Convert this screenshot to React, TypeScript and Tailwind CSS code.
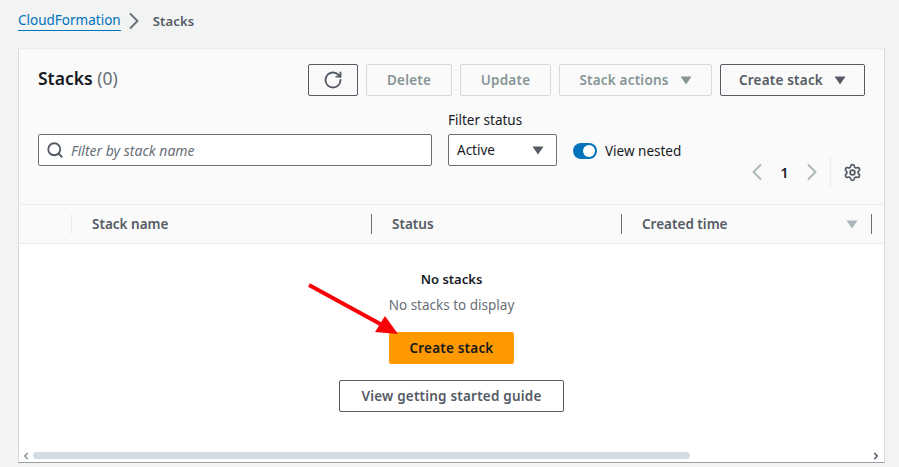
import React from 'react';
import { RotateCw, Search, ChevronLeft, ChevronRight, Settings } from 'lucide-react';

const font = "font-['Noto_Sans','Open_Sans',sans-serif]";

function Caret({ className }: { className: string }) {
  return (
    <svg width="12" height="9" viewBox="0 0 12 9" className={className}>
      <path d="M0.5 0.5H11.5L6 8.5Z" fill="currentColor" />
    </svg>
  );
}

function Btn({ children, off, className }: { children: React.ReactNode; off?: boolean; className: string }) {
  return (
    <div
      className={`h-8 flex items-center justify-center rounded-[2px] border text-[13.5px] font-semibold tracking-[0.2px] ${
        off ? 'border-[#d5dbdb] text-[#879596]' : 'border-[#545b64] text-[#545b64]'
      } ${className}`}
    >
      {children}
    </div>
  );
}

function Th({ label, className, children }: { label: string; className: string; children?: React.ReactNode }) {
  return (
    <div className={`h-5 flex items-center justify-between border-r border-[#687078] text-[13.5px] font-semibold text-[#545b64] pl-5 ${className}`}>
      {label}
      {children}
    </div>
  );
}

export default function App() {
  return (
    <div className={`relative w-[899px] h-[467px] overflow-hidden bg-[#f2f3f3] ${font}`}>
      <div className="h-[48px] pl-[18px] pt-[11px] flex items-start text-[13.5px] leading-5">
        <span className="text-[#0073bb] border-b border-[#0073bb] leading-[19px]">CloudFormation</span>
        <ChevronRight className="w-[28px] h-[28px] -mt-[4px] -mx-[1px] text-[#687078]" strokeWidth={1.6} />
        <span className="ml-[6px] font-semibold text-[#545b64] text-[13px] tracking-[0.2px]">Stacks</span>
      </div>

      <div className="ml-[18px] w-[867px] h-[415px] bg-white border-l border-r border-b border-t border-t-[#eaeded] border-l-[#d5dbdb] border-r-[#d5dbdb] border-b-[#9aa0a6] flex flex-col">
        <div className="h-[156px] bg-[#fafafa] border-b border-[#eaeded] px-[19px] pt-[15px] flex flex-col">
          <div className="flex items-start justify-between">
            <div className="text-[17.5px] leading-[28px] font-semibold text-[#16191f]">
              Stacks <span className="font-normal text-[#687078]">(0)</span>
            </div>
            <div className="flex gap-2">
              <Btn className="w-[50px]">
                <RotateCw className="w-[20px] h-[20px]" strokeWidth={2.2} />
              </Btn>
              <Btn off className="w-[86px]">Delete</Btn>
              <Btn off className="w-[91px]">Update</Btn>
              <Btn off className="w-[153px] gap-[11px]">
                Stack actions <Caret className="text-[#879596]" />
              </Btn>
              <Btn className="w-[145px] gap-[11px]">
                Create stack <Caret className="text-[#545b64]" />
              </Btn>
            </div>
          </div>

          <div className="flex items-start mt-[23px]">
            <div className="w-[394px] h-8 mt-[15px] bg-white border border-[#687078] rounded-[2px] flex items-center pl-[7px] text-[14px] italic text-[#687078]">
              <Search className="w-[18px] h-[18px] mr-[7px] text-[#545b64]" strokeWidth={2.4} />
              Filter by stack name
            </div>
            <div className="ml-4 w-[109px]">
              <div className="text-[13.5px] leading-[19px] text-[#16191f] -mt-[8px] mb-[4px]">Filter status</div>
              <div className="h-8 bg-white border border-[#687078] rounded-[2px] flex items-center justify-between pl-2 pr-[12px] text-[13.5px] text-[#16191f]">
                Active <Caret className="text-[#545b64]" />
              </div>
            </div>
            <div className="ml-4 mt-[22px] flex items-center gap-2 text-[13.5px] text-[#16191f]">
              <div className="w-6 h-4 rounded-full bg-[#0073bb] flex items-center justify-end pr-[2px]">
                <div className="w-3 h-3 rounded-full bg-white" />
              </div>
              View nested
            </div>
          </div>

          <div className="flex justify-end items-center -mt-[10px] h-[32px] pr-[3px]">
            <ChevronLeft className="w-[28px] h-[28px] text-[#aab7b8]" strokeWidth={1.7} />
            <span className="w-[27px] text-[14px] font-semibold text-[#16191f] text-center">1</span>
            <ChevronRight className="w-[28px] h-[28px] text-[#aab7b8]" strokeWidth={1.7} />
            <div className="h-8 border-l border-[#eaeded] ml-[4px] mr-[12px]" />
            <Settings className="w-[19px] h-[19px] text-[#545b64]" strokeWidth={2.2} />
          </div>
        </div>

        <div className="h-[39px] bg-[#fafafa] border-b border-[#eaeded] flex items-center shrink-0">
          <div className="w-[53px] h-5 border-r border-[#eaeded]" />
          <Th label="Stack name" className="w-[300px]" />
          <Th label="Status" className="w-[250px]" />
          <Th label="Created time" className="w-[250px] pr-[13px]">
            <Caret className="text-[#aab7b8]" />
          </Th>
        </div>

        <div className="flex-1 relative flex flex-col items-center pt-[26px]">
          <div className="text-[13px] font-semibold leading-[19px] text-[#16191f]">No stacks</div>
          <div className="text-[13.5px] leading-5 mt-[6px] text-[#687078]">No stacks to display</div>
          <div className="mt-[17px] w-[125px] h-8 rounded-[2px] bg-[#ff9900] flex items-center justify-center text-[13.5px] tracking-[0.2px] font-semibold text-[#16191f]">
            Create stack
          </div>
          <Btn className="mt-4 w-[225px] bg-white">View getting started guide</Btn>

          <div className="absolute left-[2px] right-[2px] bottom-[3px] h-[7px] flex items-center">
            <span className="text-[#879596]"><ChevronLeft className="w-[10px] h-[10px]" strokeWidth={4} /></span>
            <div className="ml-[2px] w-[657px] h-[7px] rounded-full bg-[#d1dce5]" />
            <span className="ml-auto mr-[1px] text-[#545b64]"><ChevronRight className="w-[10px] h-[10px]" strokeWidth={4} /></span>
          </div>
        </div>
      </div>

      {/* annotation arrow */}
      <svg className="absolute left-0 top-0 pointer-events-none" width="899" height="467" viewBox="0 0 899 467">
        <line x1="309" y1="285" x2="384" y2="326" stroke="#fb0007" strokeWidth="4" />
        <path d="M398 334 L375 332 L385 316 Z" fill="#fb0007" />
      </svg>
    </div>
  );
}
